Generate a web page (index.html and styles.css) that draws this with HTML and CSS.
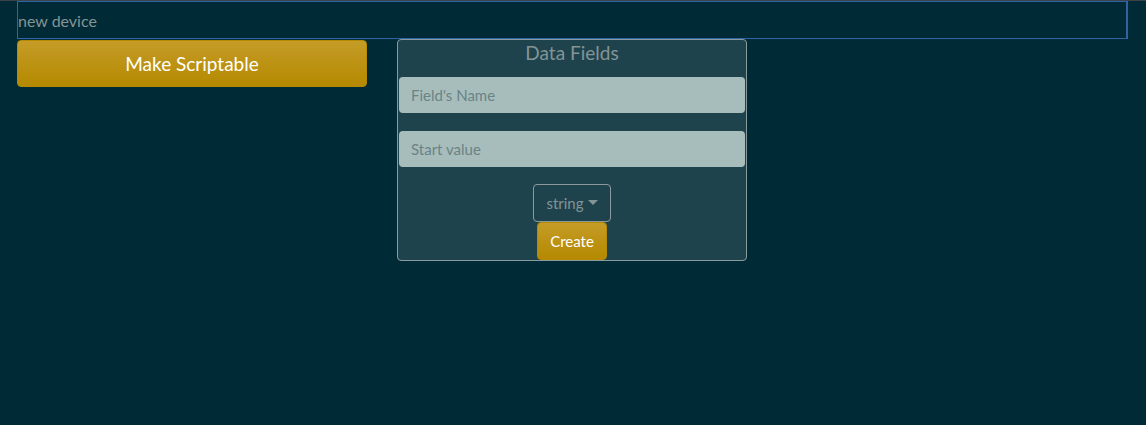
FILE: index.html
```html
<!DOCTYPE html>
<html>
<head>
<meta charset="utf-8">
<link rel="stylesheet" href="styles.css">
</head>
<body>
<div class="page">
  <input class="name-input" type="text" value="new device">
  <div class="row">
    <button class="btn-gold btn-big">Make Scriptable</button>
    <div class="panel">
      <div class="panel-title">Data Fields</div>
      <input class="field" type="text" placeholder="Field's Name">
      <input class="field" type="text" placeholder="Start value">
      <div class="actions">
        <button class="dropdown">string<span class="caret"></span></button>
        <button class="btn-gold btn-small">Create</button>
      </div>
    </div>
  </div>
</div>
</body>
</html>
```

FILE: styles.css
```css
html, body {
  margin: 0;
  padding: 0;
  background: #002b36;
  height: 100%;
}
body {
  font-family: Lato, "Open Sans", sans-serif;
}
.page {
  border-top: 1px solid #3d4447;
  padding: 0 18px 0 17px;
}
.name-input {
  display: block;
  box-sizing: border-box;
  width: 100%;
  height: 38px;
  margin: 0;
  padding: 0;
  background: #002b36;
  border: 1px solid #2e63a6;
  border-right-width: 2px;
  outline: none;
  color: #839496;
  font-family: inherit;
  font-size: 16px;
}
.row {
  display: flex;
  align-items: flex-start;
  gap: 30px;
}
.btn-gold {
  background: linear-gradient(#c49c27, #b58900);
  border: 1px solid #b58900;
  color: #fff;
  font-family: inherit;
  border-radius: 4px;
  cursor: pointer;
  padding: 0;
}
.btn-big {
  width: 350px;
  height: 47px;
  margin-top: 1px;
  font-size: 19px;
}
.panel {
  box-sizing: border-box;
  width: 350px;
  height: 222px;
  background: #1f434c;
  border: 1px solid #8a9a9d;
  border-radius: 4px;
  padding: 0 1px;
  display: flex;
  flex-direction: column;
}
.panel-title {
  color: #839496;
  font-size: 19px;
  text-align: center;
  height: 37px;
  line-height: 26px;
}
.field {
  box-sizing: border-box;
  width: 100%;
  height: 36px;
  margin: 0 0 18px;
  padding: 0 12px;
  border: none;
  border-radius: 4px;
  background: #a7bdbc;
  font-family: inherit;
  font-size: 15px;
  color: #333;
}
.field::placeholder {
  color: #6b8385;
}
.actions {
  display: flex;
  flex-direction: column;
  align-items: center;
  margin-top: -1px;
}
.dropdown {
  box-sizing: border-box;
  width: 78px;
  height: 38px;
  background: transparent;
  border: 1px solid #8a9a9d;
  border-radius: 4px;
  color: #839496;
  font-family: inherit;
  font-size: 15px;
  padding: 0;
  display: flex;
  align-items: center;
  justify-content: center;
  gap: 4px;
}
.caret {
  width: 0;
  height: 0;
  border-left: 5px solid transparent;
  border-right: 5px solid transparent;
  border-top: 5px solid #839496;
  margin-top: -2px;
}
.btn-small {
  width: 70px;
  height: 38px;
  font-size: 15px;
}
```
